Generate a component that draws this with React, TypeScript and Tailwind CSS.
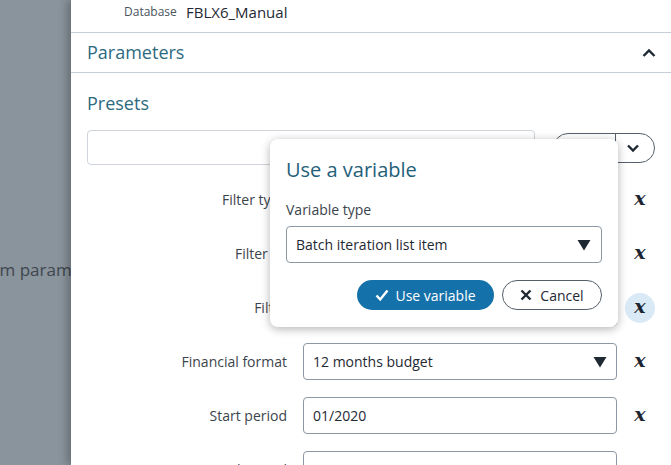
import React from "react";

const rows = [
  { label: "Filter type", kind: "select", value: "" },
  { label: "Filter by", kind: "select", value: "" },
  { label: "Filter", kind: "input", value: "", active: true },
  { label: "Financial format", kind: "select", value: "12 months budget" },
  { label: "Start period", kind: "input", value: "01/2020" },
  { label: "End period", kind: "input", value: "12/2020" },
];

const Caret = () => (
  <svg width="14" height="12" viewBox="0 0 14 12" className="shrink-0">
    <path d="M0.5 1h13L7 11.5z" fill="#1f2933" />
  </svg>
);

const VarIcon = ({ active }: { active?: boolean }) => (
  <div
    className={`w-[30px] h-[30px] rounded-full flex items-center justify-center ${
      active ? "bg-[#d9e9f5]" : ""
    }`}
  >
    <span className="font-['DejaVu_Serif',serif] italic font-bold text-[19px] leading-none text-[#1b2430] -mt-[3px]">
      x
    </span>
  </div>
);

export default function App() {
  return (
    <div className="w-[671px] h-[465px] overflow-hidden flex bg-[#8a949c] font-['Open_Sans',sans-serif]">
      <div className="w-[71px] shrink-0 overflow-hidden flex items-start pt-[257px]">
        <span className="whitespace-nowrap text-[17px] text-[#3e464e] ml-[-46px]">
          Custom parameters
        </span>
      </div>

      <div className="relative flex-1 bg-white shadow-[-4px_0_8px_rgba(0,0,0,0.25)] flex flex-col">
        <div className="shrink-0 h-[33px] border-b border-[#c7ced5] flex items-start pt-[2px] pl-[53px]">
          <span className="text-[12px] text-[#4a535c] w-[62px] leading-[20px]">Database</span>
          <span className="text-[15px] text-[#1f2933] leading-[20px]">FBLX6_Manual</span>
        </div>

        <div className="shrink-0 h-[40px] border-b border-[#c7ced5] flex items-center justify-between pl-4 pr-[14px]">
          <span className="text-[18px] text-[#2d6a80]">Parameters</span>
          <svg width="16" height="16" viewBox="0 0 16 16">
            <path d="M2.5 11 8 5.5 13.5 11" fill="none" stroke="#1f2933" strokeWidth="2.4" />
          </svg>
        </div>

        <div className="shrink-0 px-4 pt-[17px]">
          <div className="text-[18px] text-[#2d6a80] leading-[26px]">Presets</div>
          <div className="mt-[14px] flex items-center">
            <div className="w-[448px] h-[35px] border border-[#cfd5db] rounded-[4px]" />
            <div className="ml-[18px] w-[102px] h-[30px] border border-[#56606a] rounded-full flex">
              <div className="w-[62px] border-r border-[#56606a]" />
              <div className="flex-1 flex items-center justify-center pr-[4px]">
                <svg width="16" height="16" viewBox="0 0 16 16">
                  <path d="M3 5.5 8 10.5 13 5.5" fill="none" stroke="#1f2933" strokeWidth="2.4" />
                </svg>
              </div>
            </div>
          </div>

          <div className="mt-[16px] flex flex-col gap-[17px]">
            {rows.map((r) => (
              <div key={r.label} className="flex items-center h-[37px] shrink-0">
                <div className="w-[216px] text-right text-[14px] text-[#3b444d] pr-[16px] whitespace-nowrap">
                  {r.label}
                </div>
                <div className="w-[314px] h-[37px] border border-[#8c98a4] rounded-[4px] flex items-center justify-between px-[9px] text-[14px] text-[#1f2933]">
                  <span className={r.label === "End period" ? "text-[#b8bec4]" : ""}>{r.value}</span>
                  {r.kind === "select" && <Caret />}
                </div>
                <div className="ml-[8px]">
                  <VarIcon active={r.active} />
                </div>
              </div>
            ))}
          </div>
        </div>

        <div className="absolute left-[199px] top-[139px] w-[348px] h-[188px] bg-white rounded-[8px] shadow-[0_2px_10px_rgba(0,0,0,0.3)] px-[16px] pt-[17px]">
          <div className="text-[20px] text-[#1f6079] leading-[28px]">Use a variable</div>
          <div className="mt-[16px] text-[14px] text-[#3b444d] leading-[20px]">Variable type</div>
          <div className="mt-[6px] h-[37px] border border-[#8c98a4] rounded-[4px] flex items-center justify-between pl-[9px] pr-[10px] text-[14px] text-[#1f2933]">
            <span>Batch iteration list item</span>
            <Caret />
          </div>
          <div className="mt-[17px] flex justify-end gap-[8px]">
            <button className="h-[30px] w-[137px] rounded-full bg-[#1571a9] text-white text-[14px] flex items-center justify-center gap-[6px]">
              <svg width="14" height="14" viewBox="0 0 14 14">
                <path d="M1.5 7.5 5.2 11.5 12.5 2.5" fill="none" stroke="#fff" strokeWidth="2.4" />
              </svg>
              Use variable
            </button>
            <button className="h-[30px] w-[100px] rounded-full border border-[#56606a] bg-white text-[#1f2933] text-[14px] flex items-center justify-center gap-[8px]">
              <svg width="12" height="12" viewBox="0 0 12 12">
                <path d="M1.5 1.5 10.5 10.5M10.5 1.5 1.5 10.5" stroke="#1f2933" strokeWidth="2.4" />
              </svg>
              Cancel
            </button>
          </div>
        </div>
      </div>
    </div>
  );
}
